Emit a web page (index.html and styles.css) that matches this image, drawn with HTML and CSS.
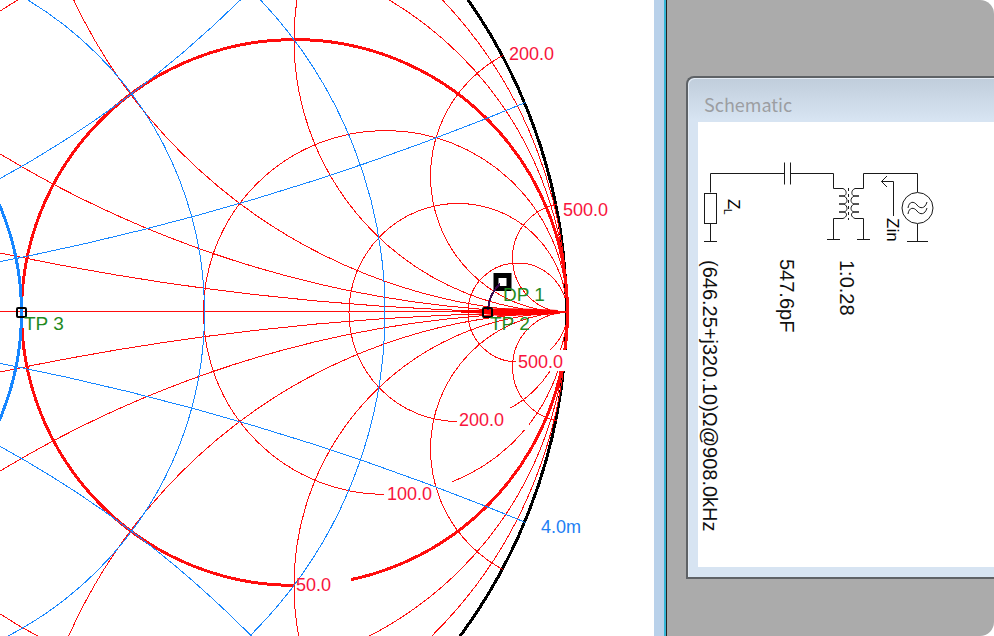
FILE: index.html
```html
<!DOCTYPE html>
<html lang="en">
<head>
<meta charset="utf-8">
<title>Smith chart</title>
<link rel="stylesheet" href="styles.css">
</head>
<body>
<div class="desktop">
  <main class="chart-window">
    <svg class="chart" viewBox="0 0 655 636" preserveAspectRatio="xMinYMin slice" role="img" aria-label="Smith chart">
      <defs>
        <clipPath id="disc"><circle cx="21.5" cy="312.5" r="546"/></clipPath>
      </defs>
      <circle class="rim" cx="21.5" cy="312.5" r="545"/>
      <g class="red" clip-path="url(#disc)">
        <circle cx="112.5" cy="312.5" r="454.5"/>
        <circle cx="203.5" cy="312.5" r="363.5"/>
        <circle cx="385.5" cy="312.5" r="182"/>
        <circle cx="458" cy="312.5" r="109"/>
        <circle cx="517.5" cy="312.5" r="49.5"/>
      </g>
      <circle class="red thick" cx="294.5" cy="312.5" r="273"/>
      <path class="tangent" d="M565.5 298V325"/>
      <g class="blank">
        <rect x="295" y="572" width="56" height="24"/>
        <rect x="384" y="482" width="68" height="22"/>
        <rect x="457" y="408" width="72" height="22"/>
        <rect x="516" y="350" width="54" height="21"/>
      </g>
      <g class="red" clip-path="url(#disc)">
        <circle cx="567" cy="-2415" r="2727.5"/>
        <circle cx="567" cy="3040" r="2727.5"/>
        <circle cx="567" cy="-778.5" r="1091"/>
        <circle cx="567" cy="1403.5" r="1091"/>
        <circle cx="567" cy="-233" r="545.5"/>
        <circle cx="567" cy="858" r="545.5"/>
        <circle cx="567" cy="39.5" r="273"/>
        <circle cx="567" cy="585.5" r="273"/>
        <circle cx="567" cy="176" r="136.5"/>
        <circle cx="567" cy="449" r="136.5"/>
        <circle cx="567" cy="258" r="54.5"/>
        <circle cx="567" cy="367" r="54.5"/>
        <line x1="0" y1="311.5" x2="567" y2="311.5"/>
      </g>
      <path class="wedge" d="M461 310H475L500 308L540 309L558 310V314L540 315L500 316L475 313H461Z"/>
      <g class="blue" clip-path="url(#disc)">
        <circle cx="-160" cy="312.5" r="364.5"/>
        <circle cx="-69.5" cy="312.5" r="454.5"/>
        <circle cx="-524" cy="-2415" r="2727.5"/>
        <circle cx="-524" cy="3040" r="2727.5"/>
        <circle cx="-524" cy="-778.5" r="1091"/>
        <circle cx="-524" cy="1403.5" r="1091"/>
      </g>
      <circle class="blue thick" cx="-251.5" cy="312.5" r="273"/>
      <rect class="dp" x="496" y="275.5" width="13" height="13"/>
      <path class="trace" d="M488 310Q489 294 500 284"/>
      <rect class="tp" x="483" y="308" width="9" height="9" rx="1"/>
      <rect class="tp" x="17" y="308" width="9" height="9" rx="1"/>
      <g class="scale">
        <text x="509" y="60">200.0</text>
        <text x="563" y="216">500.0</text>
        <text x="518" y="368">500.0</text>
        <text x="459" y="426">200.0</text>
        <text x="387" y="500">100.0</text>
        <text x="296" y="591">50.0</text>
        <text class="scale-blue" x="541" y="533">4.0m</text>
      </g>
      <g class="point">
        <text x="24" y="330">TP 3</text>
        <text x="490" y="330">TP 2</text>
        <text x="503" y="301">DP 1</text>
      </g>
    </svg>
  </main>
  <aside class="workspace">
    <section class="schematic-window">
      <h1 class="title">Schematic</h1>
      <div class="sheet">
        <svg class="schematic" viewBox="698 122 296 446" preserveAspectRatio="xMinYMin slice" role="img" aria-label="Matching network">
          <g class="wire">
            <path d="M710.5 192.5V173.5H784.5M784.5 162.500V184.500M790.5 162.500V184.500M790.5 173.500H833.5V188.500H843"/>
            <rect x="704.5" y="193.500" width="12" height="30"/>
            <path d="M710.5 224V241M704 241.500H717"/>
            <path d="M833.5 240V218.500H843M827 239.500H840M857 239.500H870M863.5 240V218.500H855M855 188.500H863.5V173.500H917.5V192"/>
            <path d="M843 188.500C847 190 847 195 844 196H839H844C848 198 848 203 844 204H839H844C848 206 848 211 844 212H839H844C848 213 847 217 843 218.500"/>
            <path d="M855 188.500C851 190 851 195 854 196H859H854C850 198 850 203 854 204H859H854C850 206 850 211 854 212H859H854C850 213 851 217 855 218.500"/>
            <path stroke-dasharray="3 3" d="M848.500 188V220"/>
            <path d="M893.500 216V181.500H881.500M887 176L881.500 181.500L887 187"/>
            <circle cx="917.500" cy="208" r="15.500"/>
            <path d="M908 208C909 201 914 201 917 205S925 209 927 202M908 214C909 207 914 207 917 211S925 215 927 208"/>
            <path d="M917.500 224V241M907 241.500H928"/>
          </g>
          <text class="pin" transform="translate(728 199) rotate(90)">Z</text>
          <text class="sub" transform="translate(724 209) rotate(90)">L</text>
          <text class="pin" transform="translate(887 218) rotate(90)">Zin</text>
          <text class="value" transform="translate(703 260) rotate(90)">(646.25+j320.10)Ω@908.0kHz</text>
          <text class="value" transform="translate(780 259) rotate(90)">547.6pF</text>
          <text class="value" transform="translate(840 260) rotate(90)">1:0.28</text>
        </svg>
      </div>
    </section>
  </aside>
</div>
</body>
</html>
```
FILE: styles.css
```css
* { box-sizing: border-box; }
body {
  margin: 0;
  background: #fff;
  font-family: "Liberation Sans", Arial, sans-serif;
}
.desktop {
  display: grid;
  grid-template-columns: minmax(0, 667fr) minmax(0, 327fr);
  grid-template-rows: 100vh;
  overflow: hidden;
  background: #ababab;
  border-radius: 0 14px 14px 0;
}
.chart-window {
  display: flex;
  background: #fff;
  border-right: 1px solid #222;
  box-shadow: inset -2px 0 #35b5d5, inset -12px 0 #b9d1ea;
}
.chart { width: 100%; height: 100%; padding-right: 11px; }
.workspace {
  padding: 76px 0 57px 19px;
  display: flex;
}
.schematic-window {
  flex: 1;
  min-width: 0;
  display: flex;
  flex-direction: column;
  border: 2px solid #5e6266;
  border-right: 0;
  border-radius: 8px 0 0 0;
  background: linear-gradient(#c0cddb, #d7e4f2 42px);
  box-shadow: inset 1px 1px #e4ecf5;
  padding: 0 0 10px 10px;
}
.title {
  margin: 0;
  height: 44px;
  padding-left: 6px;
  font: 18px/52px "Noto Sans CJK SC", "Noto Sans", sans-serif;
  color: #9c9ea2;
}
.sheet { flex: 1; min-height: 0; display: flex; background: #fff; }
.schematic { width: 100%; height: 100%; }
.chart circle, .chart line, .trace { fill: none; shape-rendering: crispEdges; }
.rim { stroke: #000; stroke-width: 3px; }
.red { stroke: #ff0d0d; stroke-width: 1px; }
.blue { stroke: #1686ff; stroke-width: 1px; }
.thick { stroke-width: 3px; }
.tangent { stroke: #000; stroke-width: 1px; }
.blank { fill: #fff; }
.wedge { fill: #f00; }
.trace { stroke: #3c0a50; stroke-width: 2px; }
.dp { fill: #fff; stroke: #000; stroke-width: 5px; }
.tp { fill: none; stroke: #000; stroke-width: 2px; }
.scale { font-size: 18px; fill: #f8143c; }
.scale-blue { fill: #1e80f4; }
.point { font-size: 19px; fill: #1f8a1f; }
.wire { fill: none; stroke: #1a1a1a; stroke-width: 1px; }
.pin { font-size: 17px; }
.sub { font-size: 10px; }
.value { font-size: 20px; fill: #111; }
```
